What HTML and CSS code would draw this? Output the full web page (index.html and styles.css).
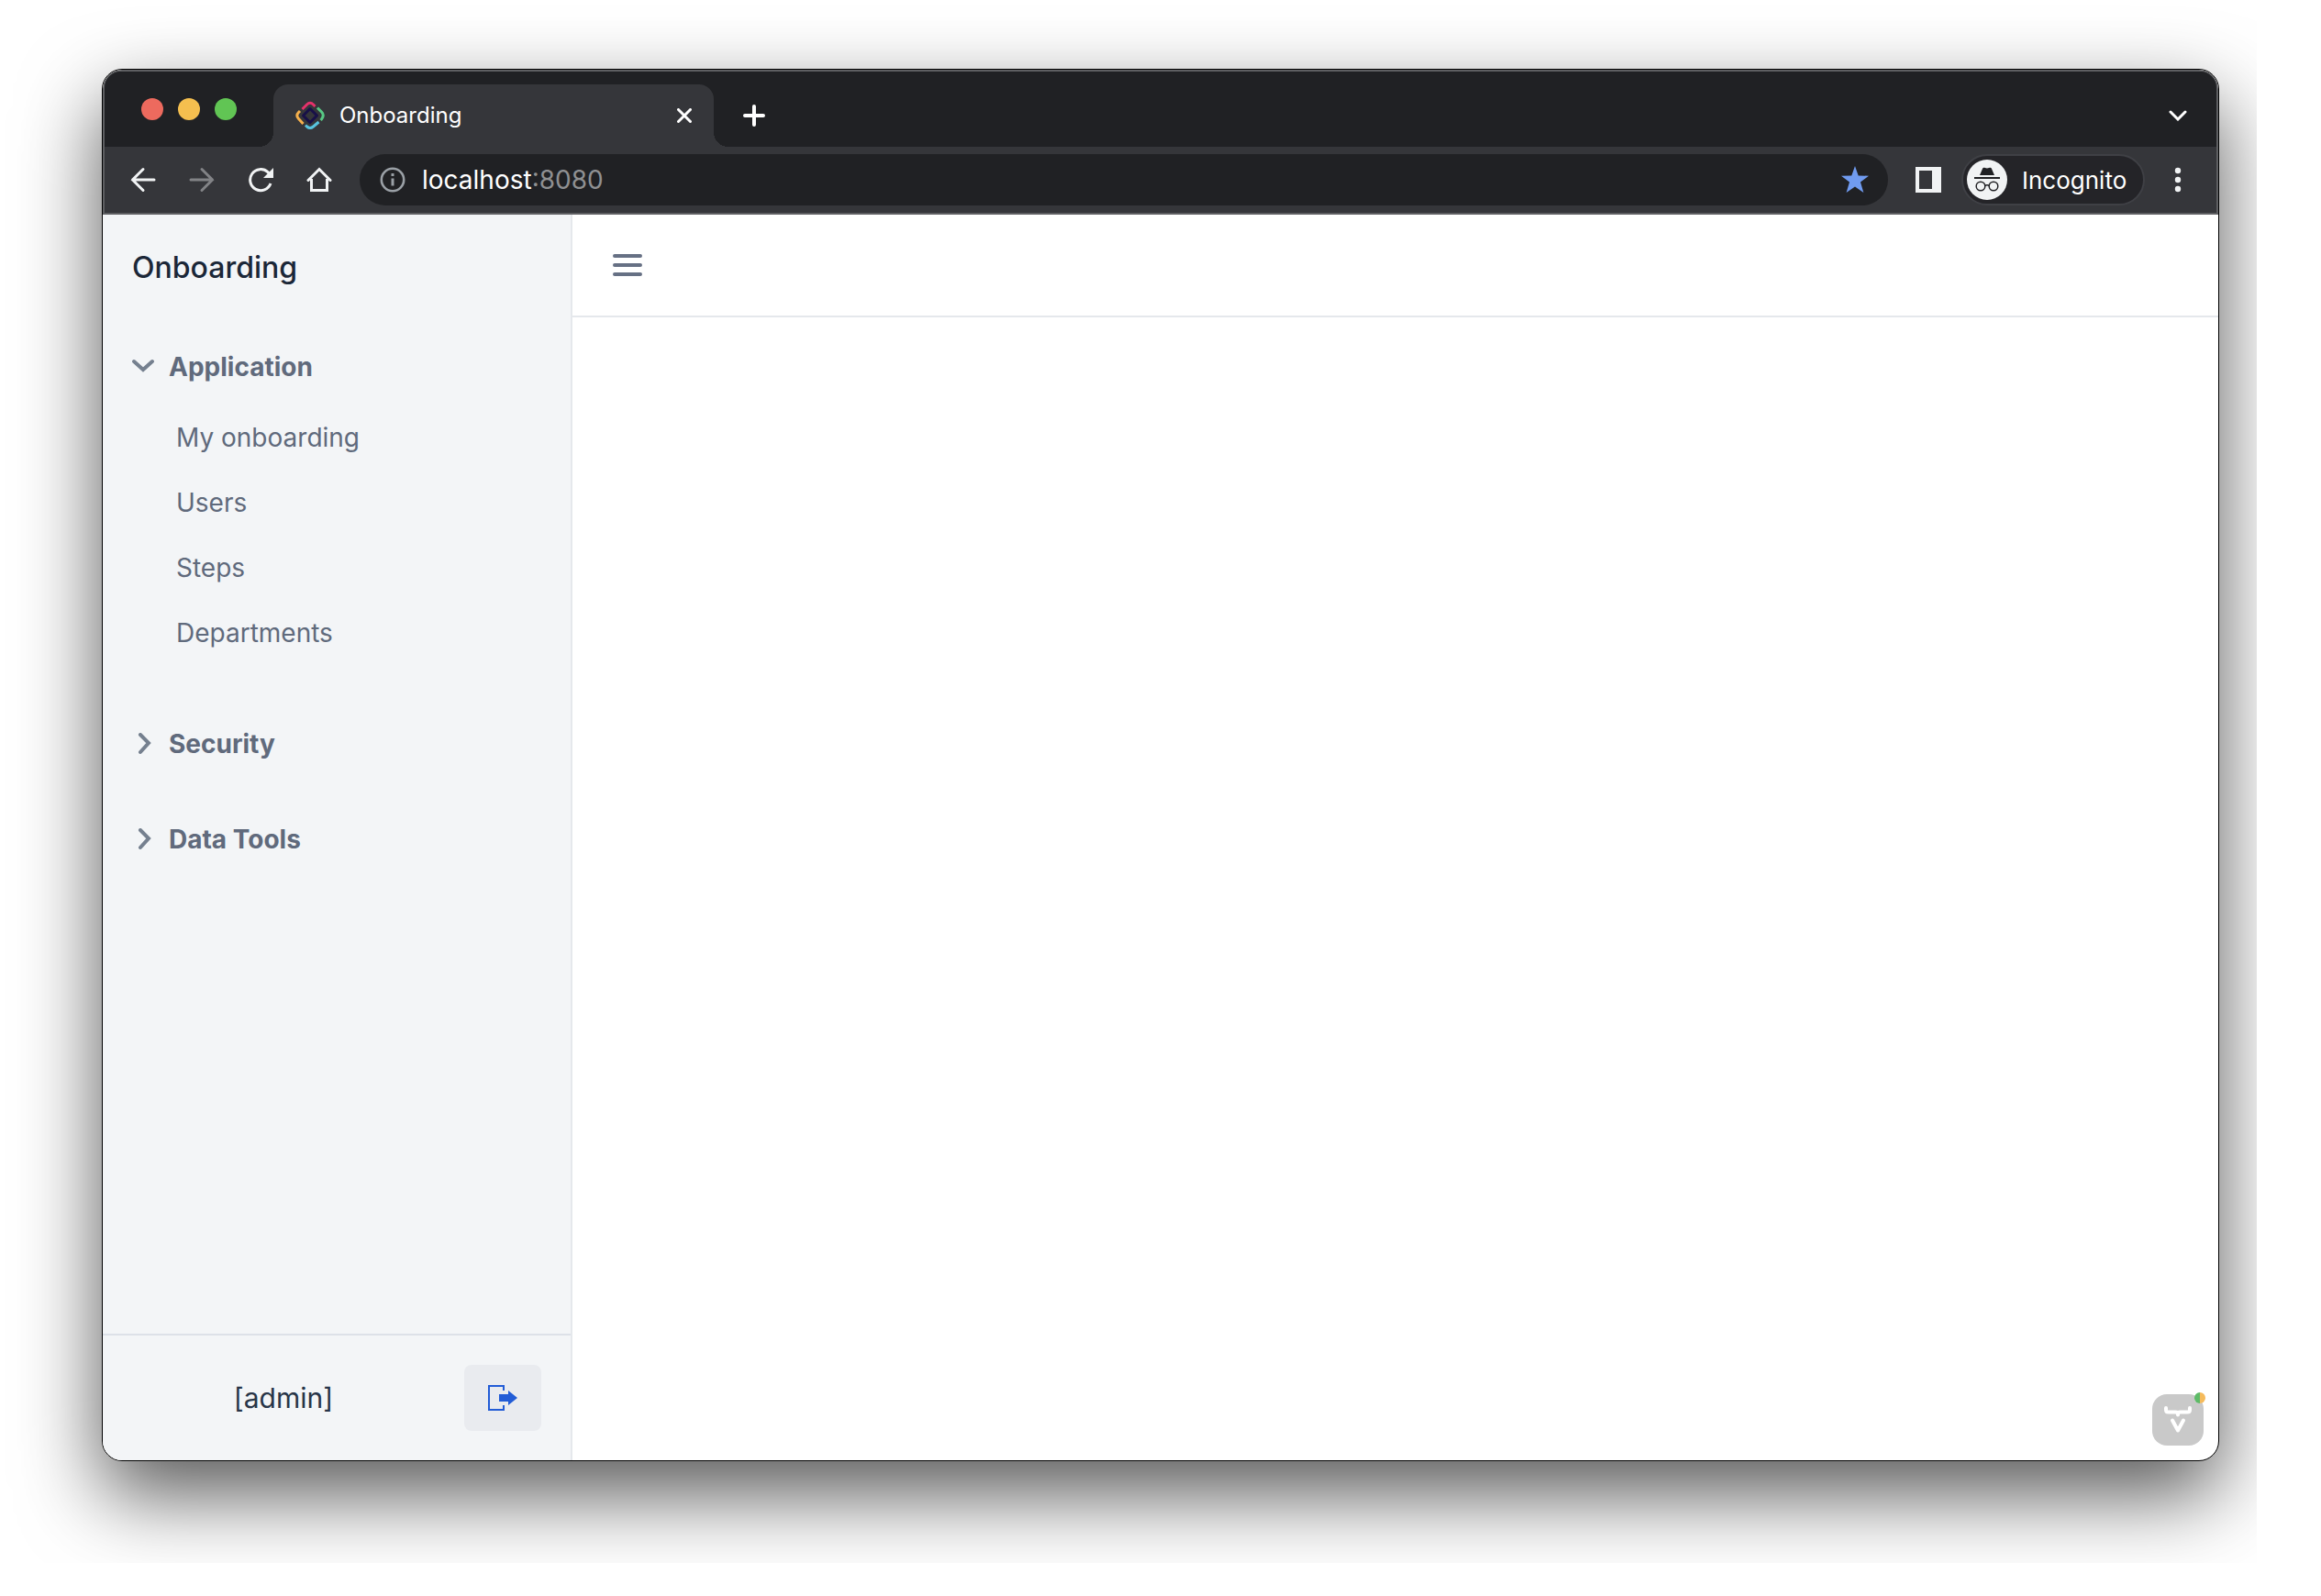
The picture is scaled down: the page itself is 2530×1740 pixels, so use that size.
FILE: index.html
```html
<!DOCTYPE html>
<html lang="en">
<head>
  <meta charset="utf-8">
  <title>Onboarding</title>
  <link rel="stylesheet" href="styles.css">
</head>
<body>
<div class="stage">
  <div class="window">
    <header class="chrome">
      <div class="tabstrip">
        <div class="lights">
          <button class="light light-close" aria-label="Close window"></button>
          <button class="light light-min" aria-label="Minimize window"></button>
          <button class="light light-max" aria-label="Zoom window"></button>
        </div>
        <div class="tab">
          <svg class="favicon" width="32" height="32" viewBox="0 0 32 32" fill="none" stroke-width="3">
            <path d="M7.500 9l5-5q3.500-3.500 7 0l2 2" stroke="#e6316b"/>
            <path d="M24 7.500l4.500 4.500q3.500 3.500 0 8l-1 1" stroke="#57c884"/>
            <path d="M25.500 23l-6 5q-3.500 3-7 0l-1.500-1.500" stroke="#57c3df"/>
            <path d="M8.500 25l-5-5.500q-3.500-3.500 0-7l1.500-1.500" stroke="#f5b04c"/>
            <path d="M16 8.500l7.500 7.500-7.500 7.500-7.500-7.500z" stroke="#181048" stroke-linejoin="round"/>
          </svg>
          <span class="tab-title">Onboarding</span>
          <button class="icon-button tab-close" aria-label="Close tab">
            <svg width="16" height="16" viewBox="0 0 16 16" stroke="#fff" stroke-width="3" stroke-linecap="round"><path d="M1.500 1.500l13 13M14.500 1.500l-13 13"/></svg>
          </button>
        </div>
        <button class="icon-button new-tab" aria-label="New tab">
          <svg width="24" height="24" viewBox="0 0 24 24" stroke="#fff" stroke-width="4" stroke-linecap="round"><path d="M12 2v20M2 12h20"/></svg>
        </button>
        <button class="icon-button tab-search" aria-label="Search tabs">
          <svg width="20" height="12" viewBox="0 0 20 12" fill="none" stroke="#fff" stroke-width="3" stroke-linecap="round"><path d="M2 2l8 8 8-8"/></svg>
        </button>
      </div>
      <div class="toolbar">
        <button class="icon-button nav-button" aria-label="Back">
          <svg width="28" height="28" viewBox="0 0 28 28" fill="none" stroke="#f1f3f4" stroke-width="3" stroke-linecap="round"><path d="M26 14H2.500M14 2.500L2.500 14 14 25.500"/></svg>
        </button>
        <button class="icon-button nav-button" aria-label="Forward">
          <svg width="28" height="28" viewBox="0 0 28 28" fill="none" stroke="#828386" stroke-width="3" stroke-linecap="round"><path d="M2 14h23.500M14 2.500L25.500 14 14 25.500"/></svg>
        </button>
        <button class="icon-button nav-button" aria-label="Reload">
          <svg width="28" height="28" viewBox="0 0 28 28" fill="none" stroke="#f1f3f4" stroke-width="3"><path d="M25 18A11.500 11.500 0 1 1 22 5.700l1.500 1.500"/><path d="M28 1v11H17z" fill="#f1f3f4" stroke="none"/></svg>
        </button>
        <button class="icon-button nav-button" aria-label="Home">
          <svg width="28" height="28" viewBox="0 0 28 28" fill="none" stroke="#f1f3f4" stroke-width="3"><path d="M5.500 13v12.500h17V13"/><path d="M2 14.500l12-12 12 12" stroke-linecap="round"/></svg>
        </button>
        <div class="omnibox">
          <svg width="28" height="28" viewBox="0 0 28 28" fill="none"><circle cx="14" cy="14" r="12.200" stroke="#9aa0a6" stroke-width="2.600"/><path d="M14 12.500v8M14 7v3" stroke="#9aa0a6" stroke-width="3"/></svg>
          <span class="address"><input class="host" type="text" value="localhost" aria-label="Address"><span class="port">:8080</span></span>
          <button class="icon-button bookmark" aria-label="Edit bookmark">
            <svg width="32" height="32" viewBox="0 0 32 32" fill="#709bf0"><path d="M16 1l3.700 10.500 11.300.2-9 6.900 3.400 11.400-9.400-6.600L6.600 30 10 18.600 1 11.700l11.300-.2z"/></svg>
          </button>
        </div>
        <button class="icon-button side-panel" aria-label="Side panel">
          <svg width="28" height="28" viewBox="0 0 28 28"><path d="M0 0h28v28H0zM4 4v20h14V4z" fill="#f1f3f4" fill-rule="evenodd"/></svg>
        </button>
        <button class="profile">
          <svg width="44" height="44" viewBox="0 0 44 44" fill="none"><circle cx="22" cy="22" r="22" fill="#f1f3f4"/><path d="M14 17l3-7q.5-1.500 2-1.200l3 .7 3-.7q1.500-.3 2 1.200l3 7z" fill="#202124"/><path d="M8 20h28" stroke="#202124" stroke-width="2"/><circle cx="15" cy="29" r="4.800" stroke="#202124" stroke-width="1.500"/><circle cx="29" cy="29" r="4.800" stroke="#202124" stroke-width="1.500"/><path d="M19.500 28.500q2.500-1.500 5 0" stroke="#202124" stroke-width="1.500"/></svg>
          <span>Incognito</span>
        </button>
        <button class="icon-button menu" aria-label="Browser menu">
          <svg width="8" height="28" viewBox="0 0 8 28" fill="#f1f3f4"><circle cx="4" cy="4" r="3.200"/><circle cx="4" cy="14" r="3.200"/><circle cx="4" cy="24" r="3.200"/></svg>
        </button>
      </div>
    </header>
    <div class="app">
      <aside class="sidebar">
        <h1 class="app-title">Onboarding</h1>
        <nav class="nav">
          <section class="group">
            <button class="group-title" aria-expanded="true">
              <svg width="24" height="24" viewBox="0 0 24 24" fill="none" stroke="#75808f" stroke-width="4" stroke-linecap="round"><path d="M2 6l10 9 10-9"/></svg>
              Application
            </button>
            <ul class="links">
              <li><a href="#my-onboarding">My onboarding</a></li>
              <li><a href="#users">Users</a></li>
              <li><a href="#steps">Steps</a></li>
              <li><a href="#departments">Departments</a></li>
            </ul>
          </section>
          <section class="group">
            <button class="group-title" aria-expanded="false">
              <svg width="24" height="24" viewBox="0 0 24 24" fill="none" stroke="#75808f" stroke-width="4" stroke-linecap="round"><path d="M9 2l9 9-9 10"/></svg>
              Security
            </button>
          </section>
          <section class="group">
            <button class="group-title" aria-expanded="false">
              <svg width="24" height="24" viewBox="0 0 24 24" fill="none" stroke="#75808f" stroke-width="4" stroke-linecap="round"><path d="M9 2l9 9-9 10"/></svg>
              Data Tools
            </button>
          </section>
        </nav>
        <footer class="user">
          <span class="user-name">[admin]</span>
          <button class="logout" aria-label="Log out">
            <svg width="32" height="28" viewBox="0 0 32 28"><path d="M17 6V1H1v26h16v-5" fill="none" stroke="#225cd6" stroke-width="2"/><path d="M12 10h10V6l10 8-10 8v-4H12z" fill="#225cd6"/></svg>
          </button>
        </footer>
      </aside>
      <main class="main">
        <div class="topbar">
          <button class="icon-button drawer-toggle" aria-label="Toggle menu">
            <svg width="32" height="24" viewBox="0 0 32 24" stroke="#667084" stroke-width="4" stroke-linecap="round"><path d="M2 2h28M2 12h28M2 22h28"/></svg>
          </button>
        </div>
        <button class="devtools" aria-label="Development tools">
          <svg width="56" height="56" viewBox="0 0 56 56" fill="none" stroke="#fff" stroke-width="4" stroke-linecap="round" stroke-linejoin="round"><path d="M15 15v2q0 2.500 2.500 2.500h8q2.500 0 2.500 3 0-3 2.500-3h8q2.500 0 2.500-2.500v-2"/><path d="M22 28.500l6 11 6-11"/></svg>
          <span class="status"></span>
        </button>
      </main>
    </div>
  </div>
</div>
</body>
</html>
```
FILE: styles.css
```css
* {
  box-sizing: border-box;
}

body {
  margin: 0;
  min-height: 100vh;
  padding: 0 70px 36px 0;
  display: flex;
  background: #fff;
  color: #1b2738;
  font-family: Inter, "Liberation Sans", sans-serif;
}

button {
  border: 0;
  padding: 0;
  background: none;
  color: inherit;
  font: inherit;
}

svg {
  display: block;
  flex: none;
}

.stage {
  flex: 1;
  display: flex;
  padding: 75px 41px 111px 111px;
  overflow: hidden;
}

.window {
  flex: 1;
  display: flex;
  flex-direction: column;
  border: 1px solid #000;
  border-radius: 22px;
  overflow: hidden;
  background: #fff;
  box-shadow: 0 36px 88px rgba(0, 0, 0, 0.66);
}

.icon-button {
  display: flex;
  align-items: center;
  justify-content: center;
}

/* Browser chrome */

.chrome {
  border: 2px solid #5e5f62;
  border-radius: 20px 20px 0 0;
  background: #35363a;
  color: #fff;
  overflow: hidden;
}

.tabstrip {
  display: flex;
  height: 82px;
  padding-right: 14px;
  background: #202124;
}

.lights {
  display: flex;
  gap: 16px;
  padding: 29px 40px 0;
  width: 184px;
}

.light {
  width: 24px;
  height: 24px;
  border-radius: 50%;
}

.light-close { background: #ed6a5e; }
.light-min { background: #f5bf4f; }
.light-max { background: #61c554; }

.tab {
  position: relative;
  display: flex;
  align-items: center;
  width: 480px;
  height: 68px;
  margin-top: 14px;
  padding: 0 16px 0 24px;
  border-radius: 16px 16px 0 0;
  background: #35363a;
}

.tab::before,
.tab::after {
  content: "";
  position: absolute;
  bottom: 0;
  width: 16px;
  height: 16px;
}

.tab::before {
  right: 100%;
  background: radial-gradient(circle at 0 0, #202124 16px, #35363a 16px);
}

.tab::after {
  left: 100%;
  background: radial-gradient(circle at 100% 0, #202124 16px, #35363a 16px);
}

.tab-title {
  flex: 1;
  margin-left: 16px;
  font-size: 24px;
  line-height: 32px;
}

.tab-close {
  width: 32px;
  height: 32px;
}

.new-tab {
  width: 56px;
  height: 56px;
  margin: 20px auto 0 16px;
}

.tab-search {
  width: 56px;
  height: 56px;
  margin-top: 20px;
}

.toolbar {
  display: flex;
  align-items: center;
  height: 72px;
  padding: 0 6px 0 10px;
}

.nav-button {
  width: 64px;
  height: 56px;
}

.omnibox {
  flex: 1;
  display: flex;
  align-items: center;
  height: 56px;
  margin: 0 8px 0 12px;
  padding: 0 20px 0 22px;
  border-radius: 28px;
  background: #202124;
}

.address {
  display: flex;
  flex: 1;
  margin-left: 18px;
  font-size: 28px;
  line-height: 36px;
}

.host {
  field-sizing: content;
  border: 0;
  padding: 0;
  background: none;
  color: #fff;
  font: inherit;
}

.port {
  color: #8f9092;
}

.side-panel {
  width: 72px;
  height: 56px;
}

.profile {
  display: flex;
  align-items: center;
  gap: 16px;
  width: 200px;
  height: 56px;
  padding-left: 4px;
  border: 2px solid #3f4045;
  border-radius: 28px;
  background: #242428;
  font-size: 26px;
}

.menu {
  width: 72px;
  height: 56px;
}

/* Application */

.app {
  flex: 1;
  display: flex;
}

.sidebar {
  display: flex;
  flex-direction: column;
  width: 512px;
  border-right: 2px solid #e5e8ec;
  background: #f3f5f7;
}

.app-title {
  margin: 0;
  padding: 38px 32px 34px;
  font-size: 32px;
  line-height: 40px;
  font-weight: 500;
}

.nav {
  flex: 1;
  padding: 0 32px;
  color: #606a7c;
  font-size: 28px;
  line-height: 36px;
}

.group {
  padding: 34px 0;
}

.group:first-child {
  padding-top: 36px;
}

.group-title {
  display: flex;
  align-items: center;
  gap: 16px;
  font-weight: 700;
}

.links {
  margin: 23px 0 0;
  padding: 0;
  list-style: none;
}

.links a {
  display: block;
  padding: 18px 48px 17px;
  color: inherit;
  text-decoration: none;
}

.user {
  display: flex;
  align-items: center;
  justify-content: space-between;
  padding: 32px;
  border-top: 2px solid #dde1e8;
}

.user-name {
  flex: 1;
  padding-right: 32px;
  color: #283548;
  text-align: center;
  font-size: 30px;
  line-height: 40px;
}

.logout {
  display: flex;
  align-items: center;
  justify-content: center;
  width: 84px;
  height: 72px;
  border-radius: 8px;
  background: #e9ebef;
}

.main {
  flex: 1;
  display: flex;
  flex-direction: column;
  justify-content: space-between;
  align-items: flex-end;
}

.topbar {
  display: flex;
  align-items: center;
  width: 100%;
  height: 112px;
  padding: 0 24px;
  border-bottom: 2px solid #e5e8ec;
}

.drawer-toggle {
  width: 72px;
  height: 72px;
}

.devtools {
  position: relative;
  width: 56px;
  height: 56px;
  margin: 16px;
  border-radius: 16px;
  background: #c9c9c9;
}

.status {
  position: absolute;
  top: -2px;
  right: -2px;
  width: 12px;
  height: 12px;
  border-radius: 50%;
  background: linear-gradient(90deg, #5dbb68 50%, #f5bb5c 50%);
}
```
